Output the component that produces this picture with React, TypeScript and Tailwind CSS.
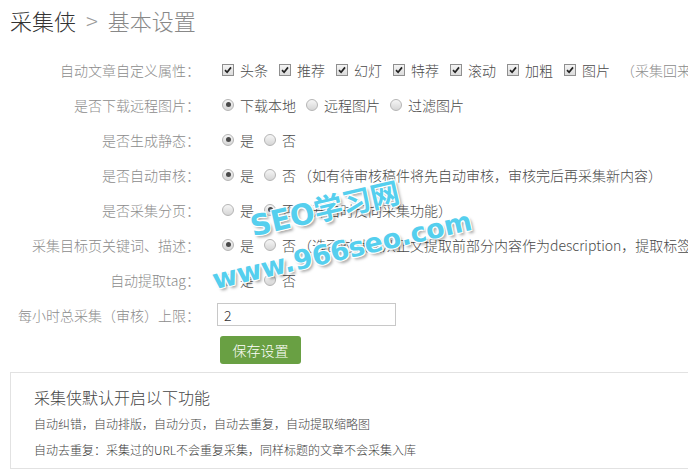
import React from 'react'

const Check = () => (
  <span className="mr-[6px] inline-flex h-[12px] w-[12px] shrink-0 items-center justify-center border border-[#8f8f8f] bg-gradient-to-b from-[#f4f4f4] to-[#dcdcdc]">
    <svg width="8" height="8" viewBox="0 0 8 8">
      <path d="M1 4.2 L3.1 6.3 L7 1.4" fill="none" stroke="#222" strokeWidth="1.7" />
    </svg>
  </span>
)

const Radio = ({ on }: { on?: boolean }) => (
  <span className="mr-[6px] inline-flex h-[12px] w-[12px] shrink-0 items-center justify-center rounded-full border border-[#b5b5b5] bg-gradient-to-b from-[#f6f6f6] to-[#d6d6d6]">
    {on && <span className="h-[5px] w-[5px] rounded-full bg-[#4a4a4a]" />}
  </span>
)

const Row = ({ label, children }: { label: string; children: React.ReactNode }) => (
  <div className="flex h-[35px] items-center">
    <div className="w-[200px] shrink-0 text-right text-[14px] text-[#8c8c8c]">{label}</div>
    <div className="ml-[22px] flex items-center whitespace-nowrap text-[14px] text-[#4a4a4a]">{children}</div>
  </div>
)

const Opt = ({ text, on }: { text: string; on?: boolean }) => (
  <>
    <Radio on={on} />
    <span className="mr-[10px]">{text}</span>
  </>
)

const attrs = ['头条', '推荐', '幻灯', '特荐', '滚动', '加粗', '图片']

export default function App() {
  return (
    <div className="relative h-[471px] w-[688px] overflow-hidden bg-white font-['Noto_Sans_CJK_SC',sans-serif] font-light leading-none [text-spacing-trim:space-all]">
      <div className="flex h-[40px] items-center pl-[10px] text-[22px]">
        <span className="text-[#333]">采集侠</span>
        <span className="ml-[10px] text-[#999]">&gt;</span>
        <span className="ml-[10px] text-[#888]">基本设置</span>
      </div>

      <div className="mt-[12px]">
        <Row label="自动文章自定义属性：">
          {attrs.map((a) => (
            <React.Fragment key={a}>
              <Check />
              <span className="mr-[11px]">{a}</span>
            </React.Fragment>
          ))}
          <span className="text-[#8c8c8c]">（采集回来的文章将自动设置以上属性）</span>
        </Row>
        <Row label="是否下载远程图片：">
          <Opt text="下载本地" on />
          <Opt text="远程图片" />
          <Opt text="过滤图片" />
        </Row>
        <Row label="是否生成静态：">
          <Opt text="是" on />
          <Opt text="否" />
        </Row>
        <Row label="是否自动审核：">
          <Opt text="是" on />
          <Radio />
          <span>否</span>
          <span className="ml-[2px]">（如有待审核稿件将先自动审核，审核完后再采集新内容）</span>
        </Row>
        <Row label="是否采集分页：">
          <Opt text="是" />
          <Radio on />
          <span>否</span>
          <span className="ml-[2px]">（开启时反向采集功能）</span>
        </Row>
        <Row label="采集目标页关键词、描述：">
          <Opt text="是" on />
          <Radio />
          <span>否</span>
          <span className="ml-[2px]">（选否时默认从正文提取前部分内容作为description，提取标签作为keywords）</span>
        </Row>
        <Row label="自动提取tag：">
          <Opt text="是" on />
          <Opt text="否" />
        </Row>
        <Row label="每小时总采集（审核）上限：">
          <div className="-ml-[5px] flex h-[23px] w-[179px] items-center border border-[#c8c8c8] pl-[6px] text-[14px] text-[#333]">2</div>
        </Row>
        <div className="ml-[220px] mt-[4px] flex h-[28px] w-[81px] items-center justify-center rounded-[3px] bg-[#69a043] text-[14px] text-white">
          保存设置
        </div>
      </div>

      <div className="ml-[10px] mt-[8px] h-[97px] border border-r-0 border-[#e2e2e2] pl-[23px]">
        <div className="mt-[16px] text-[16px] text-[#444]">采集侠默认开启以下功能</div>
        <div className="mt-[13px] text-[12px] text-[#444]">自动纠错，自动排版，自动分页，自动去重复，自动提取缩略图</div>
        <div className="mt-[14px] text-[12px] text-[#444]">自动去重复：采集过的URL不会重复采集，同样标题的文章不会采集入库</div>
      </div>

      <div className="absolute left-[325px] top-[210px] -translate-x-1/2 -translate-y-1/2 -rotate-[13deg] whitespace-nowrap font-['DejaVu_Sans','Noto_Sans_CJK_SC',sans-serif] text-[29px] font-bold text-[#55cfee] [text-shadow:1px_1px_0_#fff,-1px_-1px_0_#fff,1px_-1px_0_#fff,-1px_1px_0_#fff,2px_3px_3px_rgba(0,0,0,0.35)]">
        SEO学习网
      </div>
      <div className="absolute left-[342px] top-[250px] -translate-x-1/2 -translate-y-1/2 -rotate-[13deg] whitespace-nowrap font-['DejaVu_Sans',sans-serif] text-[27px] font-bold text-[#55cfee] [text-shadow:1px_1px_0_#fff,-1px_-1px_0_#fff,1px_-1px_0_#fff,-1px_1px_0_#fff,2px_3px_3px_rgba(0,0,0,0.35)]">
        www.966seo.com
      </div>
    </div>
  )
}
